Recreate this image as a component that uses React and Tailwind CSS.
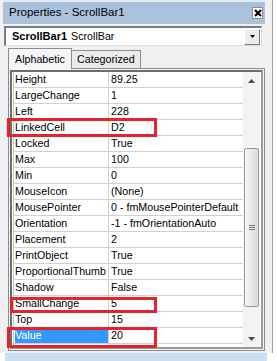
import React from 'react';

const rows = [
  ['Height', '89.25'],
  ['LargeChange', '1'],
  ['Left', '228'],
  ['LinkedCell', 'D2'],
  ['Locked', 'True'],
  ['Max', '100'],
  ['Min', '0'],
  ['MouseIcon', '(None)'],
  ['MousePointer', '0 - fmMousePointerDefault'],
  ['Orientation', '-1 - fmOrientationAuto'],
  ['Placement', '2'],
  ['PrintObject', 'True'],
  ['ProportionalThumb', 'True'],
  ['Shadow', 'False'],
  ['SmallChange', '5'],
  ['Top', '15'],
  ['Value', '20'],
];

const Arrow = ({ down }) => (
  <svg width="7" height="4" viewBox="0 0 7 4">
    {down ? <polygon points="0,0 7,0 3.5,4" fill="#4a4a4a" /> : <polygon points="0,4 7,4 3.5,0" fill="#4a4a4a" />}
  </svg>
);

const ScrollBar = () => (
  <div className="w-[17px] flex flex-col bg-[#f3f3f3]">
    <div className="h-[17px] flex items-center justify-center">
      <Arrow />
    </div>
    <div className="flex-1 flex flex-col px-[1px]">
      <div className="h-[59px]" />
      {/* thumb */}
      <div className="h-[159px] rounded-[2px] border border-[#979797] bg-gradient-to-r from-[#f6f6f6] to-[#dadada] flex flex-col items-center justify-center gap-[1px]">
        <div className="w-[6px] h-[1px] bg-[#7a7a7a]" />
        <div className="w-[6px] h-[1px] bg-[#7a7a7a]" />
        <div className="w-[6px] h-[1px] bg-[#7a7a7a]" />
      </div>
    </div>
    <div className="h-[17px] flex items-center justify-center">
      <Arrow down />
    </div>
  </div>
);

const App = () => {
  return (
    <div className="relative w-[277px] h-[361px] bg-white overflow-hidden text-black" style={{ fontFamily: '"Liberation Sans", Arial, sans-serif' }}>
      <div className="w-[273px] h-[353px] bg-[#f0f0f0] border-r border-[#9aa4ae] flex flex-col pl-[3px] pr-[7px]">
        {/* Title bar */}
        <div className="h-[24px] border-t-2 border-[#e4ebf2] bg-[#a9c1db] flex items-center justify-between pl-[6px] pr-[2px]">
          <span className="text-[11.5px]">Properties - ScrollBar1</span>
          <div className="w-[11px] h-[12px] bg-white border border-[#8d8d8d] flex items-center justify-center">
            <svg width="8" height="8" viewBox="0 0 8 8">
              <path d="M1 1 L7 7 M7 1 L1 7" stroke="#000" strokeWidth="2.2" />
            </svg>
          </div>
        </div>

        {/* Object combo */}
        <div className="mt-[2px] ml-[1px] w-[258px] h-[20px] bg-white border-t-2 border-l-2 border-t-[#7c7c7c] border-l-[#7c7c7c] border-r border-b border-r-[#dcdcdc] border-b-[#dcdcdc] flex items-center">
          <span className="pl-[6px] text-[11px] font-bold">ScrollBar1</span>
          <span className="pl-[4px] text-[10.7px]">ScrollBar</span>
          <div className="ml-auto mr-[1px] w-[16px] h-[16px] bg-[#ececec] border border-t-white border-l-white border-r-[#7a7a7a] border-b-[#7a7a7a] flex items-center justify-center">
            <svg width="5" height="3" viewBox="0 0 5 3">
              <polygon points="0,0 5,0 2.5,3" fill="#000" />
            </svg>
          </div>
        </div>

        {/* Tabs */}
        <div className="mt-[2px] h-[20px] ml-[5px] flex items-end text-[10.7px]">
          <div className="relative z-10 -mb-[1px] h-[21px] w-[64px] border-t border-l border-r border-[#898c95] bg-[#f4f4f4] flex items-center pl-[6px]">
            Alphabetic
          </div>
          <div className="h-[18px] w-[69px] border-t border-r border-[#898c95] bg-[#ebebeb] flex items-center pl-[5px]">
            Categorized
          </div>
        </div>

        {/* Tab panel */}
        <div className="ml-[5px] w-[257px] h-[283px] border border-[#898c95] bg-[#f4f4f4] p-[1px]">
          <div className="h-[279px] border-2 border-t-[#6d6d6d] border-l-[#6d6d6d] border-r-[#9a9a9a] border-b-[#9a9a9a] bg-white flex pl-[1px] pr-[1px]">
            <div className="flex-1 border-l border-[#c8c8c8] text-[10.7px]">
              {rows.map(([name, value]) => (
                <div key={name} className="h-[16px] flex">
                  <div className="w-[95px] border-r border-b border-[#d0d0d0] flex items-center pl-[1px]">
                    {name === 'Value' ? (
                      <span className="flex-1 h-[14px] bg-[#3399ff] text-white flex items-center">{name}</span>
                    ) : (
                      <span className="whitespace-nowrap">{name}</span>
                    )}
                  </div>
                  <div className="flex-1 border-b border-[#d0d0d0] flex items-center pl-[2px] whitespace-nowrap overflow-hidden">
                    {value}
                  </div>
                </div>
              ))}
            </div>
            <ScrollBar />
          </div>
        </div>
      </div>
      <div className="ml-[5px] w-[262px] h-[8px] bg-[#cbdff2]" />

      {/* Red highlight boxes */}
      <div className="absolute left-[7px] top-[118px] w-[150px] h-[19px] border-[3px] border-[#e6222b]" />
      <div className="absolute left-[10px] top-[297px] w-[147px] h-[16px] border-[3px] border-[#e6222b]" />
      <div className="absolute left-[7px] top-[327px] w-[150px] h-[21px] border-[3px] border-[#e6222b]" />
    </div>
  );
};

export default App;
